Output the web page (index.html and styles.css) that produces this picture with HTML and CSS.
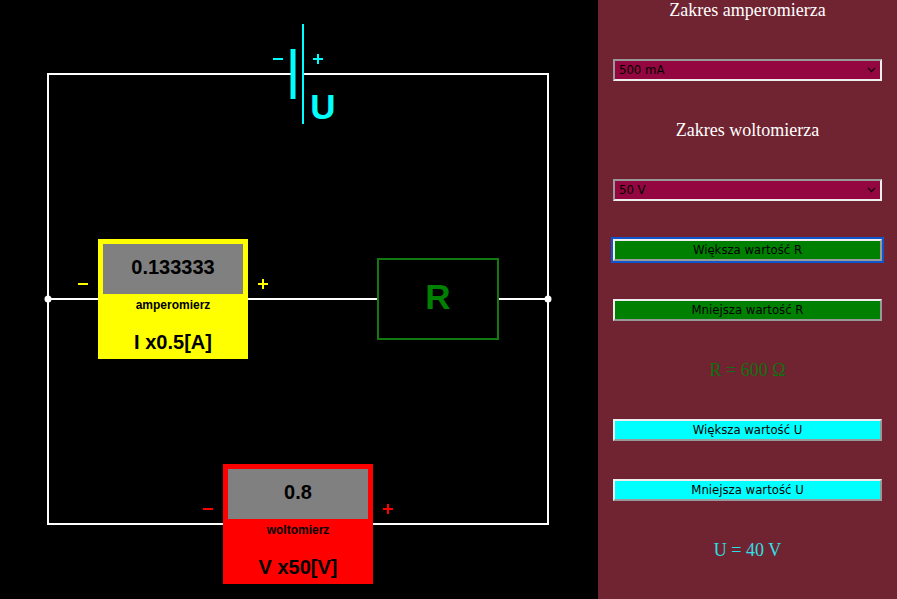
FILE: index.html
```html
<!DOCTYPE html>
<html lang="pl">
<head>
<meta charset="utf-8">
<meta name="viewport" content="width=device-width, initial-scale=1">
<title>Prawo Ohma</title>
<link rel="stylesheet" href="styles.css">
</head>
<body>
<main class="app">
  <section class="board">
    <svg class="circuit" viewBox="0 0 598 599" preserveAspectRatio="xMinYMin meet" role="img" aria-label="Obwód elektryczny">
      <g class="wire">
        <path d="M291 74H48V524H548V74H304"/>
        <path d="M48 299H548"/>
      </g>
      <circle class="node" cx="48" cy="299" r="3.5"/>
      <circle class="node" cx="548" cy="299" r="3.5"/>

      <g class="source">
        <path class="thick" d="M293 49V99"/>
        <path d="M303 24V124M273 59H283M313 59H323M318 54V64"/>
        <text class="symbol" x="323" y="119">U</text>
      </g>

      <g class="resistor">
        <rect x="378" y="259" width="120" height="80"/>
        <text class="symbol" x="438" y="309">R</text>
      </g>

      <g class="ammeter">
        <rect class="case" x="98" y="239" width="150" height="120"/>
        <rect class="display" x="103" y="244" width="140" height="50"/>
        <path d="M78 284H88M258 284H268M263 279V289"/>
        <text class="reading" x="173" y="274">0.133333</text>
        <text class="name" x="173" y="309">amperomierz</text>
        <text class="reading" x="173" y="349">I x0.5[A]</text>
      </g>

      <g class="voltmeter">
        <rect class="case" x="223" y="464" width="150" height="120"/>
        <rect class="display" x="228" y="469" width="140" height="50"/>
        <path d="M203 509H213M383 509H393M388 504V514"/>
        <text class="reading" x="298" y="499">0.8</text>
        <text class="name" x="298" y="534">woltomierz</text>
        <text class="reading" x="298" y="574">V x50[V]</text>
      </g>
    </svg>
  </section>
  <aside class="panel">
    <div class="row first"><label for="ammeter-range">Zakres amperomierza</label></div>
    <div class="row"><select class="control range" id="ammeter-range"><option>500 mA</option></select></div>
    <div class="row"><label for="voltmeter-range">Zakres woltomierza</label></div>
    <div class="row"><select class="control range" id="voltmeter-range"><option>50 V</option></select></div>
    <div class="row"><button class="control green active" type="button">Większa wartość R</button></div>
    <div class="row"><button class="control green" type="button">Mniejsza wartość R</button></div>
    <div class="row"><output class="value-r">R = 600 Ω</output></div>
    <div class="row"><button class="control cyan" type="button">Większa wartość U</button></div>
    <div class="row"><button class="control cyan" type="button">Mniejsza wartość U</button></div>
    <div class="row"><output class="value-u">U = 40 V</output></div>
  </aside>
</main>
</body>
</html>
```
FILE: styles.css
```css
* {
  box-sizing: border-box;
}

body {
  margin: 0;
  background: #000;
}

.app {
  display: grid;
  grid-template-columns: 2fr 1fr;
  min-height: 100vh;
}

.circuit {
  display: block;
  width: 100%;
  fill: none;
  stroke-width: 2;
}

.circuit text {
  font-family: "Liberation Sans", Arial, sans-serif;
  font-weight: bold;
  text-anchor: middle;
  stroke: none;
  fill: #000;
}

.wire {
  stroke: #fff;
}

.node {
  fill: #fff;
}

.source {
  stroke: #0ff;
}

.thick {
  stroke-width: 5;
}

.resistor {
  stroke: #107a10;
}

.resistor rect {
  fill: #000;
}

.circuit .symbol {
  font-size: 35px;
}

.source .symbol {
  fill: #0ff;
}

.resistor .symbol {
  fill: #008000;
}

.ammeter {
  stroke: #ff0;
}

.voltmeter {
  stroke: #f00;
}

.case,
.display {
  stroke: none;
}

.ammeter .case {
  fill: #ff0;
}

.voltmeter .case {
  fill: #f00;
}

.display {
  fill: #808080;
}

.circuit .reading {
  font-size: 20px;
}

.circuit .name {
  font-size: 12px;
}

.panel {
  background: #702331;
  color: #fff;
  font: 18px/20px "Liberation Serif", "Times New Roman", serif;
}

.row {
  display: flex;
  align-items: center;
  justify-content: center;
  height: 60px;
}

.first {
  align-items: flex-start;
  height: 40px;
}

.control {
  width: 90%;
  height: 22px;
  padding: 0;
  border: 2px solid;
  border-radius: 0;
  color: #000;
  font: 13px/18px "DejaVu Sans Condensed", Tahoma, sans-serif;
}

.range {
  appearance: none;
  padding: 0 4px;
  border-color: #999 #eee #eee #999;
  background: #93063f url("data:image/svg+xml,%3Csvg xmlns='http://www.w3.org/2000/svg' width='9' height='6' fill='none' stroke='%23200010' stroke-width='1.5'%3E%3Cpath d='M1 1l3.5 3.5L8 1'/%3E%3C/svg%3E") no-repeat right 4px center;
}

.green,
.cyan {
  border-color: #eee #999 #999 #eee;
}

.green {
  background: #008000;
}

.cyan {
  background: #0ff;
}

.active {
  outline: 2px solid #1155cc;
}

.value-r {
  color: #107010;
}

.value-u {
  color: #2de0e8;
}
```
